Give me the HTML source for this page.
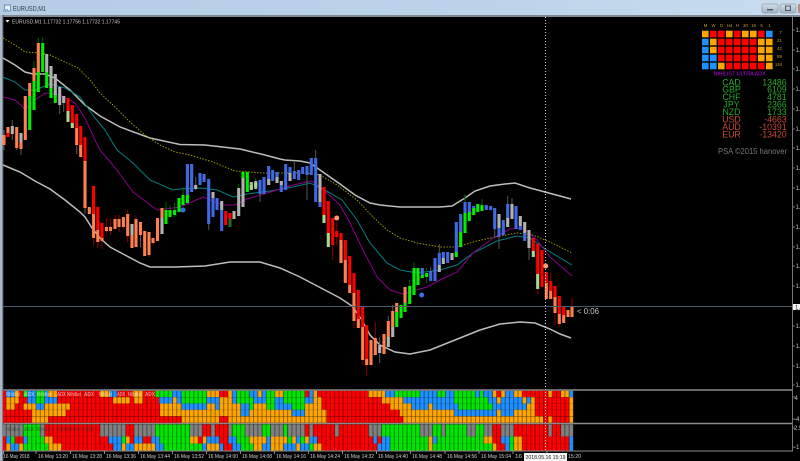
<!DOCTYPE html>
<html>
<head>
<meta charset="utf-8">
<style>
html,body{margin:0;padding:0;background:#000;width:800px;height:461px;overflow:hidden}
svg{display:block;filter:blur(.35px)}
text{font-family:"Liberation Sans",sans-serif}
</style>
</head>
<body>
<svg xmlns="http://www.w3.org/2000/svg" width="800" height="461" viewBox="0 0 800 461">
<defs>
<linearGradient id="tb" x1="0" y1="0" x2="1" y2="0"><stop offset="0" stop-color="#b4cde4"/><stop offset=".6" stop-color="#bcd3ea"/><stop offset="1" stop-color="#c8dcee"/></linearGradient>
<linearGradient id="bt" x1="0" y1="0" x2="0" y2="1"><stop offset="0" stop-color="#d5e0ea"/><stop offset="1" stop-color="#9fb2c4"/></linearGradient>
<pattern id="grid" patternUnits="userSpaceOnUse" x="1.4" y="0" width="4.265" height="10"><rect x="0" y="0" width="1" height="10" fill="#000" fill-opacity=".42"/></pattern>
</defs>
<rect width="800" height="461" fill="#000"/>
<!-- window chrome -->
<rect width="800" height="15" fill="url(#tb)"/>
<rect y="15" width="800" height="2" fill="#7f8790"/>
<rect y="15" width="2.5" height="446" fill="#a9b9c8"/>
<rect x="2.5" y="15" width="1" height="446" fill="#4a4f55"/>
<rect x="4.5" y="5" width="6" height="6" fill="#e8f0f8" stroke="#6d90b5" stroke-width="1"/>
<path d="M3 9h5v3h-5z" fill="#8fb0d0"/>
<text x="13" y="11" font-size="7.5" fill="#33404e" textLength="33" lengthAdjust="spacingAndGlyphs">EURUSD,M1</text>
<rect x="762" y="4" width="16" height="9" rx="2" fill="url(#bt)" stroke="#8a9aaa" stroke-width=".7"/>
<rect x="767" y="9" width="6" height="1.5" fill="#556"/>
<rect x="780" y="4" width="16" height="9" rx="2" fill="url(#bt)" stroke="#8a9aaa" stroke-width=".7"/>
<rect x="785.5" y="6" width="5" height="4.5" fill="none" stroke="#556" stroke-width="1"/>
<rect x="798" y="4" width="2" height="9" fill="#b98a86"/>
<!-- chart header -->
<path d="M5.5 20h4l-2 2.5z" fill="#fff"/>
<text x="12" y="23.5" font-size="5.6" fill="#c8c8c8" textLength="108" lengthAdjust="spacingAndGlyphs">EURUSD,M1  1.17732 1.17756 1.17732 1.17745</text>
<!-- moving averages -->
<g fill="none">
<polyline stroke="#bdbdbd" stroke-width="1.5" points="3,58 15,65 25,72 33,74 45,74 55,78 70,90 85,105 100,116 120,127 150,138 180,144.5 205,145 240,149 265,155 280,159 285,160 300,161 310,163 320,170 340,184 355,195 370,203 380,205 400,207 440,207 452,206 465,198 475,191 490,186 505,184 515,183 530,188 545,192 560,196 571,199"/>
<polyline stroke="#bdbdbd" stroke-width="1.5" points="3,165 20,172 35,181 50,189 65,200 80,212 85,217 92,228 100,238 110,247 125,255 140,263 150,267 175,267 205,266 230,262 260,262 280,268 300,277 340,298 352,306 362,320 370,335 380,345 395,352 410,354 430,350 450,342 460,338 480,330 500,324 520,322 535,323 550,329 560,334 571,338"/>
<polyline stroke="#9c9c00" stroke-width="1" stroke-dasharray="1.5 1.5" points="3,38 15,45 25,52 40,53 50,55 65,62 78,68 90,80 100,93 115,107 130,122 145,135 160,145 175,152 190,155 213,162 235,171 263,173 283,173 307,173 320,175 337,185 357,200 373,217 387,230 400,238 417,243 440,247 457,247 473,242 490,238 517,233 533,235 550,242 572,253"/>
<polyline stroke="#008080" stroke-width="1" points="3,77 15,82 25,90 35,90 50,84 65,88 80,97 95,118 105,130 117,150 133,163 150,180 173,190 180,189 200,188 217,190 233,197 247,194 270,191 293,187 310,183 323,189 342,200 357,220 370,243 387,263 400,270 417,273 440,270 457,265 473,253 497,241 517,236 530,238 547,250 572,265"/>
<polyline stroke="#8b008b" stroke-width="1" points="3,97 15,100 25,109 35,100 45,93 60,95 75,103 85,118 95,140 100,150 117,170 133,192 157,210 180,207 203,197 223,205 235,205 247,199 267,193 293,185 312,181 327,193 340,205 350,223 363,250 377,277 390,290 403,294 427,287 440,280 457,272 473,253 493,238 510,229 523,228 537,240 550,257 572,276"/>
</g>
<!-- wicks -->
<g fill="none" stroke-width="1">
<path stroke="#585858" d="M12.3 120V140M21 149V155M59.7 105V114M63.7 96V112M76.7 145V154M85 208V214M140.5 235V247M208.7 224V230M195.7 177V190M260 194V202M307 175V200M294.3 162V171M315.7 150V158M379.7 337V363M388.3 316V321M392.7 305V311M430.7 267V271M439.3 244V253M494.7 229V238M499 237V249M507.7 196V204M512 198V204M529 248V260M16.7 148V150M4 130V150"/>
<path stroke="#8b0000" d="M93.6 238V245M97.8 242V248M102 241V249M106.4 218V233M110.6 218V235M115 215V219M119 215V232M123.4 227V230M127.7 210V242M136 215V219M149 255V257M153 243V245M336.7 222V245M332.7 245V260M354 321V328M362.7 360V365M366.7 365V376M375.3 322V338M555 313V325M559.3 324V327M572 298V306M550.7 273V281M537.7 289V294"/>
<path stroke="#006400" d="M34 61V68M38.3 38V43M42.7 37V43M166 202V210M170 205V210M174.6 203V217M183 187V195M238.7 184V188M255.7 178V190M409.7 280V286M414 262V268M465 194V202M482 199V205M426.7 268V283"/>
</g>
<!-- candle bodies -->
<g fill="none" stroke-width="3.1">
<path stroke="#ff7f50" d="M4 135V145M8 127V133M16.7 127V148M21 142V149M25.3 96V140M29.7 83V96M34 68V81M38.3 43V72M76.7 128V145M80.7 145V157M85 161V208M89.3 207V214M93.6 214V238M97.8 230V242M102 238V241M106.4 227V231M110.6 227V231M115 219V229M119 219V227M123.4 217V227M127.7 214V236M132 235V248M136 219V247M140.5 222V235M144.7 231V256M149 232V255M153 238V243M157.5 218V241M162 208V218M341 240V263M345.3 260V283M349.7 285V293M354 293V321M358.3 319V328M362.7 327V360M366.7 359V365M371 340V365M375.3 338V355M384 334V354M388.3 321V337M392.7 311V327M396.7 303V312M405 287V303M546.3 283V299M550.7 291V299M555 297V313M559.3 314V324M563.7 315V323M568 310V317M572 306V317"/>
<path stroke="#ff0000" d="M8 133V137M68 98V111M72.3 105V123M76.7 114V128M80.7 126V145M85 137V161M93.6 186V214M97.8 207V230M102 223V238M225.7 211V225M230 213V219M324 187V215M328.3 201V233M332.7 218V245M336.7 231V237M341 233V240M345.3 240V260M349.7 256V285M354 273V293M358.3 290V319M362.7 307V327M366.7 325V359M533.3 238V251M537.7 244V274M542 250V287M546.3 272V283M550.7 281V291M555 286V297M559.3 296V314M563.7 307V315"/>
<path stroke="#00f000" d="M29.7 96V130M34 81V110M38.3 72V92M42.7 43V72M46.7 72V88M51 88V98M55.3 95V103M166 210V224M170 210V217M174.6 210V215M179 198V212M183 195V205M187.4 195V203M247.3 172V192M243 172V178M396.7 312V327M401 305V318M405 303V312M409.7 286V304M414 268V295M418 268V285M422.3 275V278M426.7 273V277M456.3 252V257M460.7 232V247M465 213V233M469.3 212V221M473.7 208V215M477.7 204V212M482 205V211"/>
<path stroke="#4169e1" d="M187.4 164V195M191.7 164V192M200 173V185M204 174V182M208.7 179V224M213 198V217M217 198V210M221.7 210V231M260 180V194M264 177V194M268.7 166V179M272.7 170V181M277 172V177M281.3 185V192M285.7 164V190M290 167V173M294.3 171V179M298.7 170V180M302.7 167V174M307 166V175M311.3 158V175M315.7 158V202M320 202V207M422.3 268V275M430.7 271V281M435 258V281M439.3 253V265M443.3 252V258M447.7 252V263M456.3 222V252M460.7 214V232M465 202V213M469.3 202V212M473.7 206V208M486.3 205V210M490.7 206V210M494.7 208V229M499 228V237M503.3 220V235M507.7 204V218M516 206V229M520.3 226V230M524.7 233V241"/>
<path stroke="#b2b2b2" d="M12.3 126V134M21 133V142M46.7 54V72M51 66V88M55.3 74V95M59.7 87V105M63.7 96V103M132 224V235M162 218V234M195.7 185V189M213 192V198M221.7 201V210M234 211V219M238.7 188V216M243 178V207M251.3 182V190M255.7 181V189M268.7 179V185M277 177V183M281.3 181V185M290 173V181M320 174V202M379.7 345V353M388.3 337V347M392.7 327V337M439.3 265V272M443.3 258V264M452 253V260M499 214V228M507.7 218V227M512 204V219M520.3 216V226M524.7 222V233M529 230V248"/>
<path stroke="#a8d890" d="M68 111V122M72.3 123V128M324 215V223M328.3 233V247M533.3 251V257M537.7 274V289M251.3 185V189M255.7 183V187"/>
<path stroke="#1f6b1f" d="M230 219V227"/>
</g>
<g>
<circle cx="183" cy="210" r="2.5" fill="#4169e1"/>
<circle cx="336.7" cy="218" r="2.5" fill="#ff9a70"/>
<circle cx="421.7" cy="295" r="2.5" fill="#4169e1"/>
<circle cx="545.7" cy="266" r="2.5" fill="#ff9a70"/>
</g>
<!-- heatmap panel 1 -->
<g fill="none" stroke-width="6.4">
<path stroke="#ff0000" d="M3 394H6M19 394H23.5M57 394H100M117 394H133M143 394H155M219.3 394H228M305 394H309.3M317.3 394H368.3M496.7 394H501M522.3 394H548.3M552.3 394H561"/>
<path stroke="#ffa500" d="M15 394H19M48 394H57M100 394H110M133 394H143M206.7 394H219.3M228 394H232M257.3 394H261.7M275 394H283.3M313.3 394H317.3M368.3 394H385M492.7 394H496.7M501 394H505.3M514 394H522.3M548.3 394H552.3M561 394H569.3"/>
<path stroke="#00e600" d="M23.5 394H27.5M36 394H45M155 394H172M182 394H206.7M236.7 394H249.3M266 394H275M283.3 394H305M395 394H420M437.3 394H445.7M454 394H475M480 394H483.3"/>
<path stroke="#1e90ff" d="M6 394H15M27.5 394H36M45 394H48M110 394H117M172 394H182M232 394H236.7M249.3 394H257.3M261.7 394H266M309.3 394H313.3M385 394H395M420 394H437.3M445.7 394H454M475 394H480M483.3 394H492.7M505.3 394H514M569.3 394H573.3"/>

<path stroke="#ff0000" d="M3 400.3H6M19 400.3H27M57 400.3H113M130 400.3H134M143 400.3H159M321.7 400.3H381.7M535 400.3H569.3"/>
<path stroke="#ffa500" d="M6 400.3H19M113 400.3H130M134 400.3H143M173 400.3H177M219.3 400.3H232.3M313.3 400.3H321.7M381.7 400.3H403.3M496.7 400.3H501M522.3 400.3H526.7M530.7 400.3H535M569.3 400.3H573.3"/>
<path stroke="#00e600" d="M36 400.3H44M182 400.3H206.7M236.7 400.3H253.3M266 400.3H275M283.3 400.3H305M454 400.3H488.3"/>
<path stroke="#1e90ff" d="M27 400.3H36M44 400.3H57M159 400.3H173M177 400.3H182M206.7 400.3H219.3M232.3 400.3H236.7M253.3 400.3H266M275 400.3H283.3M305 400.3H313.3M403.3 400.3H454M488.3 400.3H496.7M501 400.3H522.3M526.7 400.3H530.7"/>

<path stroke="#ff0000" d="M3 406.7H6M15 406.7H23.3M70 406.7H160M321.7 406.7H390M535 406.7H569.3"/>
<path stroke="#ffa500" d="M6 406.7H15M23.3 406.7H36M44.3 406.7H70M160 406.7H181.7M206.7 406.7H215M219.3 406.7H240.7M253.3 406.7H266.7M305 406.7H321.7M390 406.7H411.7M428.3 406.7H432.7M526.7 406.7H535M569.3 406.7H573.3"/>
<path stroke="#00e600" d="M249.3 406.7H253.3M266.7 406.7H275M291.7 406.7H305M458.3 406.7H492.7"/>
<path stroke="#1e90ff" d="M36 406.7H44.3M181.7 406.7H206.7M215 406.7H219.3M240.7 406.7H249.3M275 406.7H291.7M411.7 406.7H428.3M432.7 406.7H458.3M492.7 406.7H526.7"/>

<path stroke="#ff0000" d="M3 413H31.7M66 413H160M326.7 413H400M535 413H569.3"/>
<path stroke="#ffa500" d="M31.7 413H66M160 413H240.7M249.3 413H291.7M305 413H326.7M400 413H454M496.7 413H501M514 413H535M569.3 413H573.3"/>
<path stroke="#1e90ff" d="M240.7 413H249.3M291.7 413H305M454 413H496.7M501 413H514"/>

<path stroke="#ff0000" d="M3 419.6H31.7M48.3 419.6H181.7M219.3 419.6H228.3M326.7 419.6H403.3M543.3 419.6H548.3M552.3 419.6H569.3"/>
<path stroke="#ffa500" d="M31.7 419.6H48.3M181.7 419.6H219.3M228.3 419.6H326.7M403.3 419.6H543.3M548.3 419.6H552.3M569.3 419.6H573.3"/>
</g>
<!-- heatmap panel 2 -->
<g fill="none">
<g stroke-width="12">
<path stroke="#808080" d="M3 430.5H23.3M40 430.5H45M100 430.5H126M134 430.5H155M190 430.5H202.7M210.7 430.5H215M228.3 430.5H232.3M245 430.5H262.3M270.7 430.5H283.3M287.3 430.5H305M309.3 430.5H313.3M335 430.5H339.3M368.3 430.5H381.7M420 430.5H432.7M441.7 430.5H445.7M466.7 430.5H476M484 430.5H492.7M501 430.5H514M548.3 430.5H552.3M561 430.5H573.3"/>
<path stroke="#00e600" d="M23.3 430.5H40M155 430.5H190M232.3 430.5H245M262.3 430.5H270.7M283.3 430.5H287.3M381.7 430.5H420M432.7 430.5H441.7M445.7 430.5H466.7M476 430.5H484"/>
<path stroke="#ff0000" d="M45 430.5H100M126 430.5H134M202.7 430.5H210.7M215 430.5H228.3M305 430.5H309.3M313.3 430.5H335M339.3 430.5H368.3M492.7 430.5H501M514 430.5H548.3M552.3 430.5H561"/>
</g>
<g stroke-width="7">
<path stroke="#ff0000" d="M3 440H6M15 440H23.3M52.7 440H108.7M130 440H134M142.7 440H151M198.3 440H202.7M219.3 440H228.3M317.3 440H373.3M377.3 440H381.7M492.7 440H501M522.3 440H569.3"/>
<path stroke="#ffa500" d="M44.3 440H52.7M126 440H130M190 440H198.3M202.7 440H206.7M249.3 440H266.7M270.7 440H287.3M291.7 440H296M305 440H309.3M428.3 440H432.7M483.3 440H492.7M514 440H522.3"/>
<path stroke="#00e600" d="M10.7 440H15M27.3 440H44.3M121.7 440H126M159.3 440H190M236.7 440H249.3M287.3 440H291.7M300 440H305M390 440H428.3M437.3 440H483.3M510 440H514"/>
<path stroke="#1e90ff" d="M6 440H10.7M23.3 440H27.3M108.7 440H121.7M134 440H142.7M151 440H159.3M206.7 440H219.3M228.3 440H236.7M266.7 440H270.7M296 440H300M309.3 440H317.3M373.3 440H377.3M381.7 440H390M432.7 440H437.3M501 440H510M569.3 440H573.3"/>
</g>
<g stroke-width="7.5">
<path stroke="#ff0000" d="M3 447.2H6M61.7 447.2H113.3M223.3 447.2H232.3M321.7 447.2H377.3M496.7 447.2H505M522.3 447.2H569.3"/>
<path stroke="#ffa500" d="M6 447.2H10.7M19 447.2H23.3M48.3 447.2H61.7M121.7 447.2H126M134 447.2H155M206.7 447.2H219.3M253.3 447.2H262.3M270.7 447.2H283.3M296 447.2H300M313.3 447.2H321.7M428.3 447.2H432.7M492.7 447.2H496.7M514 447.2H522.3"/>
<path stroke="#00e600" d="M23.3 447.2H48.3M163.3 447.2H202.3M240.7 447.2H253.3M309.3 447.2H313.3M390 447.2H428.3M432.7 447.2H492.7M510 447.2H514"/>
<path stroke="#1e90ff" d="M10.7 447.2H19M113.3 447.2H121.7M126 447.2H134M155 447.2H163.3M202.3 447.2H206.7M219.3 447.2H223.3M232.3 447.2H240.7M262.3 447.2H270.7M283.3 447.2H296M300 447.2H309.3M377.3 447.2H390M505 447.2H510M569.3 447.2H573.3"/>
</g>
</g>
<rect x="3.5" y="391" width="570" height="32" fill="url(#grid)"/>
<rect x="3.5" y="424" width="570" height="27" fill="url(#grid)"/>
<path d="M3 397.3H573.3M3 403.6H573.3M3 410H573.3M3 416.3H573.3M3 436.5H573.3M3 443.5H573.3" stroke="#000" stroke-opacity=".18" stroke-width=".6"/>
<!-- heatmap labels -->
<g font-size="5.4" fill="#f4e8e8" fill-opacity=".6" font-weight="bold">
<text x="6" y="396" textLength="14" lengthAdjust="spacingAndGlyphs">Nihilist</text>
<text x="24" y="396" textLength="10" lengthAdjust="spacingAndGlyphs">ADX</text>
<text x="37" y="396" textLength="14" lengthAdjust="spacingAndGlyphs">Nihilist</text>
<text x="57" y="396" textLength="9" lengthAdjust="spacingAndGlyphs">ADX</text>
<text x="67" y="396" textLength="14" lengthAdjust="spacingAndGlyphs">Nihilist</text>
<text x="84" y="396" textLength="10" lengthAdjust="spacingAndGlyphs">ADX</text>
<text x="99" y="396" textLength="13" lengthAdjust="spacingAndGlyphs">Nihilist</text>
<text x="117" y="396" textLength="8" lengthAdjust="spacingAndGlyphs">ADX</text>
<text x="128" y="396" textLength="14" lengthAdjust="spacingAndGlyphs">Nihilist</text>
<text x="145" y="396" textLength="10" lengthAdjust="spacingAndGlyphs">ADX</text>
</g>
<g font-size="5.4" fill="#3a3a3a" fill-opacity=".55" font-weight="bold">
<text x="6" y="431" textLength="14" lengthAdjust="spacingAndGlyphs">Nihilist</text>
<text x="24" y="431" textLength="10" lengthAdjust="spacingAndGlyphs">ADX</text>
<text x="37" y="431" textLength="14" lengthAdjust="spacingAndGlyphs">Nihilist</text>
<text x="57" y="431" textLength="9" lengthAdjust="spacingAndGlyphs">ADX</text>
<text x="67" y="431" textLength="14" lengthAdjust="spacingAndGlyphs">Nihilist</text>
<text x="84" y="431" textLength="10" lengthAdjust="spacingAndGlyphs">ADX</text>
</g>
<!-- crosshair -->
<path d="M3.5 306.5H792" stroke="#4a5a6b" stroke-width="1"/>
<path d="M545.5 17V451" stroke="#d0d0d0" stroke-width="1" stroke-dasharray="1 2" fill="none"/>
<text x="577" y="314" font-size="8.5" fill="#c8c8c8" textLength="22" lengthAdjust="spacingAndGlyphs">&lt; 0:06</text>
<!-- panel frames -->
<path d="M3.5 390H793" stroke="#8a8a8a" stroke-width="1.6"/>
<path d="M3.5 423.5H793" stroke="#8a8a8a" stroke-width="1.6"/>
<path d="M3.5 451H793" stroke="#8a8a8a" stroke-width="1"/>
<path d="M792.5 17V451" stroke="#777" stroke-width="1"/>
<!-- price axis -->
<g font-size="6" fill="#c8c8c8">
<path d="M793 30H795M793 50H795M793 69H795M793 89H795M793 109H795M793 129H795M793 148H795M793 168H795M793 188H795M793 207H795M793 227H795M793 247H795M793 266H795M793 286H795M793 326H795M793 346H795M793 366H795M793 385H795M793 397H795M793 419H795M793 428H795M793 447H795" stroke="#999" stroke-width=".8"/>
<text x="795.5" y="32">1.</text><text x="795.5" y="52">1.</text><text x="795.5" y="71">1.</text><text x="795.5" y="91">1.</text>
<text x="795.5" y="111">1.</text><text x="795.5" y="131">1.</text><text x="795.5" y="150">1.</text><text x="795.5" y="170">1.</text>
<text x="795.5" y="190">1.</text><text x="795.5" y="209">1.</text><text x="795.5" y="229">1.</text><text x="795.5" y="249">1.</text>
<text x="795.5" y="268">1.</text><text x="795.5" y="288">1.</text>
<text x="795.5" y="328">1.</text><text x="795.5" y="348">1.</text><text x="795.5" y="368">1.</text><text x="795.5" y="387">1.</text>
<text x="794.5" y="400">4</text><text x="794" y="421">-4</text><text x="794" y="430">2.5</text><text x="794" y="449">-1</text>
</g>
<rect x="793" y="304" width="7" height="6" fill="#f4f4f4"/>
<text x="795" y="309.5" font-size="6" fill="#222">1.</text>
<!-- time axis -->
<path d="M3.5 451V454M36 451V454M70.5 451V454M104.5 451V454M138.5 451V454M172.5 451V454M206.5 451V454M240.5 451V454M274.5 451V454M308.5 451V454M342.5 451V454M376.5 451V454M410.5 451V454M445 451V454M479 451V454M513 451V454M547 451V454" stroke="#aaa" stroke-width=".8"/>
<g font-size="5.8" fill="#cfcfcf">
<text x="3.5" y="458" textLength="26" lengthAdjust="spacingAndGlyphs">16 May 2018</text>
<text x="38" y="458" textLength="30" lengthAdjust="spacingAndGlyphs">16 May 13:20</text>
<text x="72" y="458" textLength="30" lengthAdjust="spacingAndGlyphs">16 May 13:28</text>
<text x="106" y="458" textLength="30" lengthAdjust="spacingAndGlyphs">16 May 13:36</text>
<text x="140" y="458" textLength="30" lengthAdjust="spacingAndGlyphs">16 May 13:44</text>
<text x="174" y="458" textLength="30" lengthAdjust="spacingAndGlyphs">16 May 13:52</text>
<text x="208" y="458" textLength="30" lengthAdjust="spacingAndGlyphs">16 May 14:00</text>
<text x="242" y="458" textLength="30" lengthAdjust="spacingAndGlyphs">16 May 14:08</text>
<text x="276" y="458" textLength="30" lengthAdjust="spacingAndGlyphs">16 May 14:16</text>
<text x="310" y="458" textLength="30" lengthAdjust="spacingAndGlyphs">16 May 14:24</text>
<text x="344" y="458" textLength="30" lengthAdjust="spacingAndGlyphs">16 May 14:32</text>
<text x="378" y="458" textLength="30" lengthAdjust="spacingAndGlyphs">16 May 14:40</text>
<text x="412" y="458" textLength="30" lengthAdjust="spacingAndGlyphs">16 May 14:48</text>
<text x="447" y="458" textLength="30" lengthAdjust="spacingAndGlyphs">16 May 14:56</text>
<text x="481" y="458" textLength="30" lengthAdjust="spacingAndGlyphs">16 May 15:04</text>
<text x="515" y="458" textLength="7" lengthAdjust="spacingAndGlyphs">16</text>
<text x="568" y="458" textLength="13" lengthAdjust="spacingAndGlyphs">15:20</text>
</g>
<rect x="524" y="453" width="43" height="8" fill="#f6f6f6"/>
<text x="525.5" y="458.8" font-size="5.8" fill="#222" textLength="40" lengthAdjust="spacingAndGlyphs">2018.05.16 15:19</text>
<!-- top right matrix -->
<g font-size="4.2" fill="#c9a227" text-anchor="middle">
<text x="705.5" y="27">M</text><text x="713.5" y="27">W</text><text x="721.5" y="27">D</text><text x="729.5" y="27">H4</text><text x="737.5" y="27">H</text><text x="745.5" y="27">30</text><text x="753.5" y="27">15</text><text x="761.5" y="27">5</text><text x="769.5" y="27">1</text>
<text x="780.5" y="34">7</text><text x="779.5" y="42">21</text><text x="779.5" y="50">42</text><text x="779.5" y="58">89</text><text x="778.5" y="66">144</text>
</g>
<g>
<rect x="702" y="30.7" width="6.6" height="6.6" fill="#ffa500"/><rect x="710" y="30.7" width="6.6" height="6.6" fill="#f00"/><rect x="718" y="30.7" width="6.6" height="6.6" fill="#f00"/><rect x="726" y="30.7" width="6.6" height="6.6" fill="#ffa500"/><rect x="734" y="30.7" width="6.6" height="6.6" fill="#f00"/><rect x="742" y="30.7" width="6.6" height="6.6" fill="#ffa500"/><rect x="750" y="30.7" width="6.6" height="6.6" fill="#ffa500"/><rect x="758" y="30.7" width="6.6" height="6.6" fill="#f00"/><rect x="766" y="30.7" width="6.6" height="6.6" fill="#1e90ff"/>
<rect x="702" y="38.7" width="6.6" height="6.6" fill="#1e90ff"/><rect x="710" y="38.7" width="6.6" height="6.6" fill="#ffa500"/><rect x="718" y="38.7" width="6.6" height="6.6" fill="#f00"/><rect x="726" y="38.7" width="6.6" height="6.6" fill="#f00"/><rect x="734" y="38.7" width="6.6" height="6.6" fill="#f00"/><rect x="742" y="38.7" width="6.6" height="6.6" fill="#f00"/><rect x="750" y="38.7" width="6.6" height="6.6" fill="#f00"/><rect x="758" y="38.7" width="6.6" height="6.6" fill="#ffa500"/><rect x="766" y="38.7" width="6.6" height="6.6" fill="#ffa500"/>
<rect x="702" y="46.7" width="6.6" height="6.6" fill="#1e90ff"/><rect x="710" y="46.7" width="6.6" height="6.6" fill="#ffa500"/><rect x="718" y="46.7" width="6.6" height="6.6" fill="#f00"/><rect x="726" y="46.7" width="6.6" height="6.6" fill="#f00"/><rect x="734" y="46.7" width="6.6" height="6.6" fill="#f00"/><rect x="742" y="46.7" width="6.6" height="6.6" fill="#f00"/><rect x="750" y="46.7" width="6.6" height="6.6" fill="#f00"/><rect x="758" y="46.7" width="6.6" height="6.6" fill="#ffa500"/><rect x="766" y="46.7" width="6.6" height="6.6" fill="#ffa500"/>
<rect x="702" y="54.7" width="6.6" height="6.6" fill="#1e90ff"/><rect x="710" y="54.7" width="6.6" height="6.6" fill="#1e90ff"/><rect x="718" y="54.7" width="6.6" height="6.6" fill="#f00"/><rect x="726" y="54.7" width="6.6" height="6.6" fill="#f00"/><rect x="734" y="54.7" width="6.6" height="6.6" fill="#f00"/><rect x="742" y="54.7" width="6.6" height="6.6" fill="#f00"/><rect x="750" y="54.7" width="6.6" height="6.6" fill="#f00"/><rect x="758" y="54.7" width="6.6" height="6.6" fill="#ffa500"/><rect x="766" y="54.7" width="6.6" height="6.6" fill="#ffa500"/>
<rect x="702" y="62.7" width="6.6" height="6.6" fill="#1e90ff"/><rect x="710" y="62.7" width="6.6" height="6.6" fill="#1e90ff"/><rect x="718" y="62.7" width="6.6" height="6.6" fill="#ffa500"/><rect x="726" y="62.7" width="6.6" height="6.6" fill="#f00"/><rect x="734" y="62.7" width="6.6" height="6.6" fill="#f00"/><rect x="742" y="62.7" width="6.6" height="6.6" fill="#f00"/><rect x="750" y="62.7" width="6.6" height="6.6" fill="#f00"/><rect x="758" y="62.7" width="6.6" height="6.6" fill="#f00"/><rect x="766" y="62.7" width="6.6" height="6.6" fill="#ffa500"/>
</g>
<text x="713.5" y="75.5" font-size="5.2" fill="#c000e0" textLength="52" lengthAdjust="spacingAndGlyphs">NIHILIST ULTRA ADX</text>
<g font-size="8.8" text-anchor="middle" fill="#2aa82a">
<text x="731.5" y="85.3">CAD</text><text x="731.5" y="92.7">GBP</text><text x="731.5" y="100.2">CHF</text><text x="731.5" y="107.6">JPY</text><text x="731.5" y="115">NZD</text>
<text x="731.5" y="122.4" fill="#c44a35">USD</text><text x="731.5" y="129.9" fill="#c44a35">AUD</text><text x="731.5" y="137.3" fill="#c44a35">EUR</text>
</g>
<g font-size="8.8" text-anchor="end" fill="#2aa82a">
<text x="786.7" y="85.3">13486</text><text x="786.7" y="92.7">6109</text><text x="786.7" y="100.2">4781</text><text x="786.7" y="107.6">2366</text><text x="786.7" y="115">1733</text>
<text x="786.7" y="122.4" fill="#c44a35">-4663</text><text x="786.7" y="129.9" fill="#c44a35">-10391</text><text x="786.7" y="137.3" fill="#c44a35">-13420</text>
</g>
<text x="718" y="154" font-size="8.2" fill="#787878" textLength="69" lengthAdjust="spacingAndGlyphs">PSA ©2015 hanover</text>
</svg>
</body>
</html>
